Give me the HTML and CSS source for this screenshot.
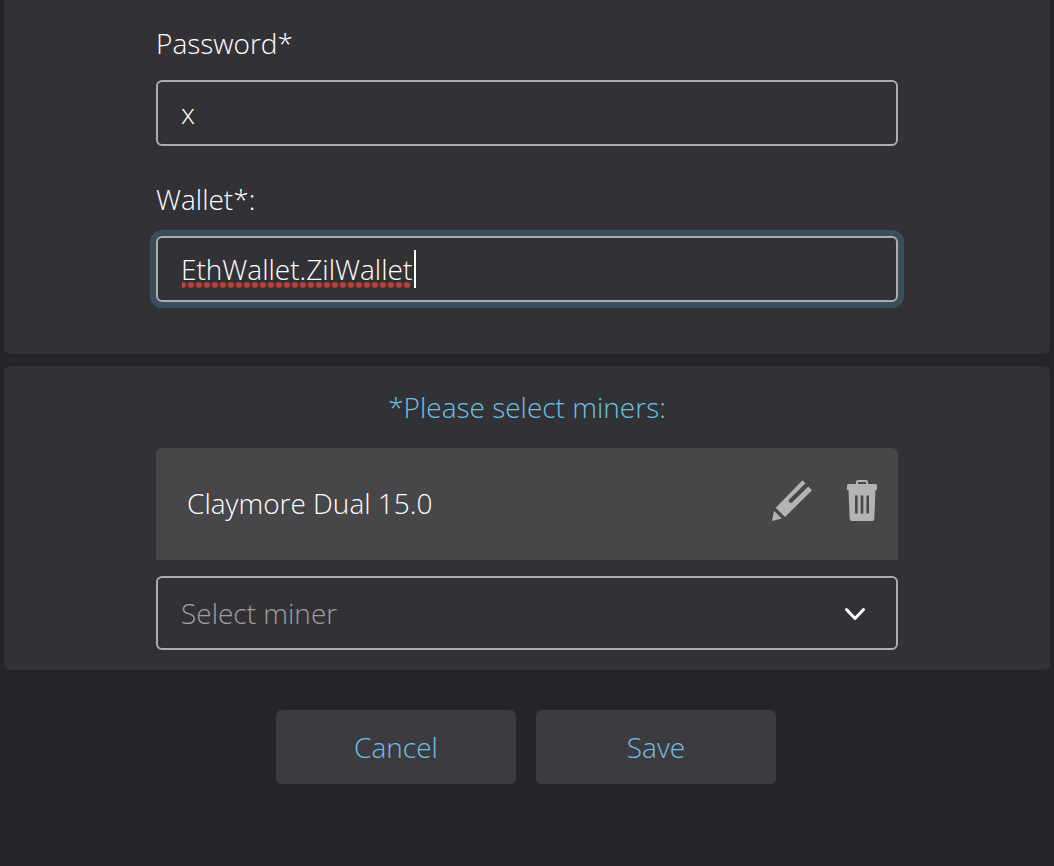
FILE: index.html
```html
<!DOCTYPE html>
<html lang="en">
<head>
    <meta charset="UTF-8">
    <meta name="viewport" content="width=device-width, initial-scale=1.0">
    <title>Wallet and miners</title>
    <link rel="stylesheet" href="styles.css">
</head>
<body>
    <form class="page">
        <section class="card card-account">
            <div class="field">
                <label for="password">Password*</label>
                <input type="text" id="password" value="x">
            </div>
            <div class="field">
                <label for="wallet">Wallet*:</label>
                <div class="input-wrap">
                    <input type="text" id="wallet" class="active" value="EthWallet.ZilWallet" spellcheck="false">
                    <span class="spell-mark"></span>
                    <span class="caret"></span>
                </div>
            </div>
        </section>

        <section class="card card-miners">
            <h2><label for="miner">*Please select miners:</label></h2>
            <div class="miner">
                <span class="miner-name">Claymore Dual 15.0</span>
                <button type="button" class="icon-button" aria-label="Edit miner">
                    <svg width="40" height="41" viewBox="0 0 40 41">
                        <path d="M30.500 .3 33.500 3.300 17.200 19.600A2 2 0 0 0 20 22.400L36.300 6.400 40 10.200 13 37 3.700 27.700Z"/>
                        <path d="M2 30.700 9.700 38.400 0 41Z"/>
                    </svg>
                </button>
                <button type="button" class="icon-button" aria-label="Delete miner">
                    <svg width="30" height="41" viewBox="0 0 30 41">
                        <path fill-rule="evenodd" d="M9 4V2q0-2 2-2h8q2 0 2 2v2h7.500q1.500 0 1.500 1.500V10H0V5.500Q0 4 1.500 4ZM11 4h8V2h-8Z"/>
                        <path fill-rule="evenodd" d="M1.500 10h27L27.300 39q-.1 2-2 2H4.700q-1.900 0-2-2ZM8 16.500v16a1.300 1.300 0 0 0 2.600 0v-16a1.300 1.300 0 0 0-2.600 0ZM13.700 16.500v16a1.300 1.300 0 0 0 2.600 0v-16a1.300 1.300 0 0 0-2.600 0ZM19.400 16.500v16a1.300 1.300 0 0 0 2.600 0v-16a1.300 1.300 0 0 0-2.600 0Z"/>
                    </svg>
                </button>
            </div>
            <div class="select-wrap">
                <select id="miner">
                    <option>Select miner</option>
                </select>
                <svg class="chevron" width="22" height="14" viewBox="0 0 22 14">
                    <path d="M2.500 2.500 11 11.500 19.500 2.500"/>
                </svg>
            </div>
        </section>

        <div class="actions">
            <button type="button" class="button">Cancel</button>
            <button type="submit" class="button">Save</button>
        </div>
    </form>
</body>
</html>
```
FILE: styles.css
```css
* {
    box-sizing: border-box;
}

body {
    margin: 0;
    min-height: 100vh;
    background-color: #252428;
    color: #fff;
    font-family: "Open Sans", sans-serif;
    font-size: 28px;
    font-weight: 300;
    line-height: 38px;
}

.page {
    padding: 0 4px;
}

.card {
    padding: 0 152px;
    background-color: #323135;
    border-radius: 6px;
}

.card-account {
    padding-top: 24px;
    padding-bottom: 52px;
    border-radius: 0 0 6px 6px;
}

.card-miners {
    margin-top: 12px;
    padding-top: 22px;
    padding-bottom: 20px;
}

.field + .field {
    margin-top: 34px;
}

.field label {
    display: block;
    margin-bottom: 18px;
}

input, select, button {
    font: inherit;
    color: inherit;
}

input, select {
    display: block;
    width: 100%;
    padding: 0 23px;
    background-color: transparent;
    border: 2px solid #adacae;
    border-radius: 6px;
    outline: none;
}

input {
    height: 66px;
}

input.active {
    box-shadow: 0 0 0 6px #3a4f5e;
}

.input-wrap, .select-wrap {
    position: relative;
}

/* red dots under the misspelled word */
.spell-mark {
    position: absolute;
    left: 26px;
    bottom: 14px;
    width: 229px;
    height: 6px;
    background: radial-gradient(circle, #c44237 2px, transparent 4px) -3px 0 / 8px 6px;
}

.caret {
    position: absolute;
    left: 258px;
    top: 14px;
    width: 2px;
    height: 38px;
    background-color: #fff;
}

h2 {
    margin: 0 0 22px;
    font-size: 28px;
    font-weight: 300;
    text-align: center;
    color: #6cc1e4;
}

.miner {
    display: flex;
    align-items: center;
    height: 112px;
    margin-bottom: 16px;
    padding: 0 21px 2px 31px;
    background-color: #474649;
    border-radius: 6px 6px 0 0;
}

.miner-name {
    flex: 1;
}

.icon-button {
    display: flex;
    margin: 0 0 6px 35px;
    padding: 0;
    background: none;
    border: none;
    cursor: pointer;
}

.icon-button svg {
    fill: #b3b2b4;
}

select {
    height: 74px;
    color: #a09fa1;
    appearance: none;
}

.chevron {
    position: absolute;
    right: 32px;
    top: 31px;
    fill: none;
    stroke: #fff;
    stroke-width: 3;
    stroke-linecap: round;
    stroke-linejoin: round;
    pointer-events: none;
}

.actions {
    display: flex;
    justify-content: center;
    gap: 20px;
    padding: 40px 2px 40px 0;
}

.button {
    width: 240px;
    height: 74px;
    background-color: #3d3b40;
    border: none;
    border-radius: 6px;
    color: #6cc1e4;
    cursor: pointer;
}
```
